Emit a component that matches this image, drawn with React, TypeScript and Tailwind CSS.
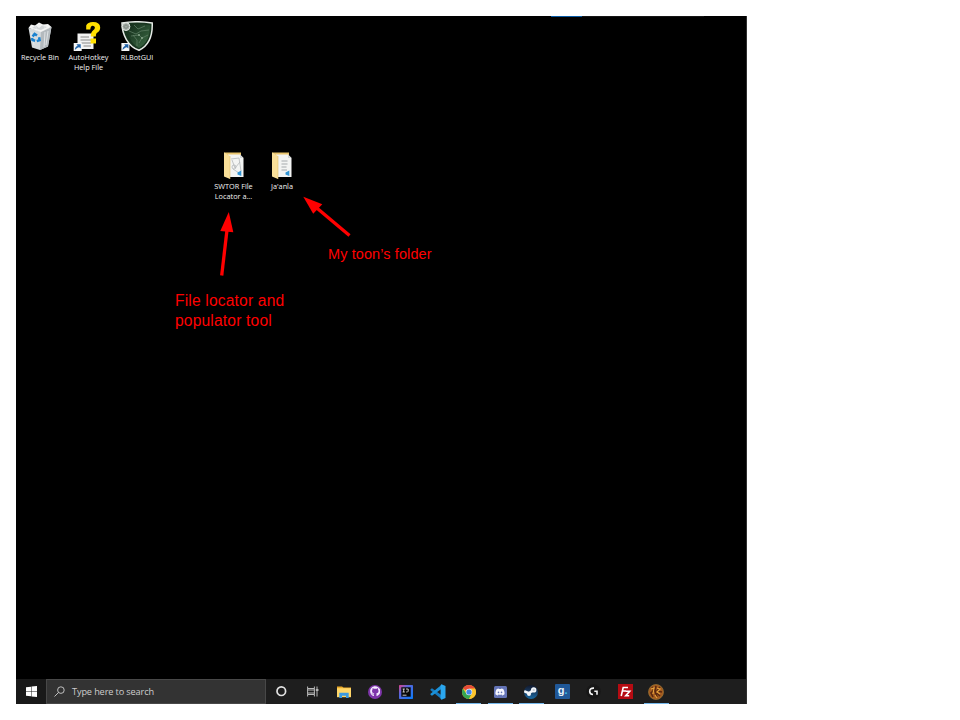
import React from "react";
import { FaGithub, FaDiscord } from "react-icons/fa";

const ui = "font-['Open_Sans','Noto_Sans',sans-serif]";

function Shortcut({ x, y }: { x: number; y: number }) {
  return (
    <g transform={`translate(${x} ${y})`}>
      <rect width="8" height="8" fill="#f4f6f8" />
      <path d="M1.2 7.1C1.1 4.5 2.4 3.1 4 2.9L2.8 1.2H7V5.4L5.5 4.2C3.8 4.5 2.6 5.4 1.2 7.1Z" fill="#1f62a8" />
    </g>
  );
}

function RecycleBin() {
  return (
    <svg width="32" height="32" viewBox="0 0 32 32">
      <path d="M4.5 7L17 10L27.5 6L24 25.5L16 29L8 26.5Z" fill="#d5dadd" />
      <path d="M17 10L27.5 6L24 25.5L16 29Z" fill="#b4babe" />
      <path d="M4.5 7L7 3.5L11 4.5L15 1.5L19 3.5L24 3L27.5 6L17 11Z" fill="#f3f4f4" />
      <path d="M8 7L12 4.5L15 7L18 4.5L23 6L17 9Z" fill="#d2d6d8" />
      <path d="M11 4.5L13 8M19 3.5L21 7M7 11L10 24M21 11L20 26M24 10L22 24" stroke="#e4e8ea" strokeWidth=".9" fill="none" />
      <g fill="none" stroke="#1a82d0" strokeWidth="2.5">
        <path d="M8.6 15.5L10.6 12.9L13 14.6" />
        <path d="M15.1 16.2L15.6 19.1L12.8 20.1" />
        <path d="M11.1 19.7L8.5 18.9L8 17" />
      </g>
    </svg>
  );
}

function HelpFile() {
  return (
    <svg width="32" height="32" viewBox="0 0 32 32">
      <path d="M4.5 12.5H20.5V28H4.5Z" fill="#f2f2f2" />
      <path d="M7.5 16H16M7.5 19H18M8.5 22H18M10.5 25H18" stroke="#888" strokeWidth="1" />
      <path d="M13.2 8.5V4.5Q14.5 1 20 1Q27 1 27.2 6.5Q27.2 10 23.7 12Q22.8 13 22.8 15.5H17.8Q17.8 11 20 9.5Q22.1 8 21.9 6.3Q21.5 4.7 19.7 4.7Q17.5 4.7 17.3 8.5Z" fill="#ffe000" />
      <path d="M17.6 17.5H23V22.5H17.6Z" fill="#ffe000" />
      <Shortcut x={.7} y={22} />
    </svg>
  );
}

function RLBot() {
  return (
    <svg width="34" height="32" viewBox="0 0 34 32">
      <defs><linearGradient id="shield" x2="1" y2="1"><stop stopColor="#122a19" /><stop offset="1" stopColor="#3d6c45" /></linearGradient></defs>
      <path d="M2 2C12 .3 22 .3 32.2 2C32.7 14.5 29 24.5 19 29.3C8 25.5 2 13.5 2 2Z" fill="#193620" stroke="#e7ece7" strokeWidth="1.5" />
      <path d="M7 4C14 2.8 22 2.8 30 4.3C30 15 27 22.5 19 27C11 22.5 7 14 7 4Z" fill="url(#shield)" />
      <path d="M9 10L16 13L21 10L29 9M11 15L19 14L22 17L28 14M14 4L18 8L25 5M17 25V19L13 14M22 17L19 22" fill="none" stroke="#638369" strokeWidth=".7" />
      <circle cx="19" cy="14" r=".9" fill="#91ae94" /><circle cx="22" cy="17" r=".9" fill="#91ae94" />
      <circle cx="6" cy="5.6" r="3.9" fill="#a2aaa4" stroke="#e5e8e5" strokeWidth="1" />
      <path d="M4 5.6L6 3.6L8 5.6L6 7.6Z" fill="none" stroke="#737b75" strokeWidth=".8" />
      <Shortcut x={1.4} y={22} />
    </svg>
  );
}

function Folder({ plain = false }: { plain?: boolean }) {
  return (
    <svg className="mb-[2px]" width="20" height="28" viewBox="0 0 20 28">
      <path d="M0 .5H17V24H1Z" fill="#eac66f" />
      <path d="M4 2.5H16L19.5 6V25H5Z" fill="#f3f4f3" />
      <path d="M16 2.5V6H19.5Z" fill="#d3d6d7" />
      {plain ? (
        <path d="M9.5 9H15.5M9.5 12H15.5M9.5 15H14.5M9.5 18H15" stroke="#9da2a6" strokeWidth=".9" />
      ) : (
        <g fill="none" stroke="#b4b8ba" strokeWidth=".8"><path d="M7 7L15 6L17 19M8 8L11 16L16 10M9 17L15 21" /><circle cx="10" cy="15" r="2" /></g>
      )}
      <path d="M13.5 20.5L17.3 18.5V24L13.5 22.5Z" fill="#3195d5" />
      <path d="M0 .5L6 4V27L0 24.5Z" fill="#f9df99" />
      <path d="M6 4V27" stroke="#dfbf70" strokeWidth=".6" />
    </svg>
  );
}

function DesktopIcon({ icon, lines, place }: { icon: React.ReactNode; lines: string[]; place: string }) {
  return (
    <div className={`absolute flex w-[60px] flex-col items-center ${place}`}>
      {icon}
      <div className={`-mt-px text-center text-[7.3px] leading-[10px] font-medium whitespace-nowrap text-[#f4f4f4] ${ui}`}>
        {lines.map((l) => <div key={l}>{l}</div>)}
      </div>
    </div>
  );
}

function TaskItem({ children, active }: { children: React.ReactNode; active?: boolean }) {
  return (
    <div className="relative flex h-full w-[31.25px] shrink-0 items-center justify-center">
      {children}
      {active && <div className="absolute bottom-0 h-px w-[25px] bg-[#76b9ed]" />}
    </div>
  );
}

function Taskbar() {
  return (
    <div className="flex h-[25px] w-full shrink-0 bg-[#1e1e1e]">
      <div className="flex w-[30px] shrink-0 items-center justify-center bg-[#191919]">
        <svg width="11" height="11" viewBox="0 0 11 11" fill="#fff"><path d="M0 1.2L5 .7V5.2H0ZM5.5.6L11 0V5.2H5.5ZM0 5.7H5V10.3L0 9.8ZM5.5 5.7H11V11L5.5 10.4Z" /></svg>
      </div>
      <div className="mr-[-.2px] flex w-[220px] shrink-0 items-center border border-[#484848] bg-[#333] pl-[7px]">
        <svg width="11" height="11" viewBox="0 0 11 11" fill="none" stroke="#cfcfcf" strokeWidth=".9"><circle cx="6.9" cy="4.1" r="3.3" /><path d="M4.5 6.5L.5 10.5" /></svg>
        <span className={`ml-[7px] text-[9.2px] leading-[14px] tracking-[-0.14px] whitespace-nowrap text-[#cdcdcd] ${ui}`}>Type here to search</span>
      </div>
      <TaskItem>
        <svg width="11" height="11" viewBox="0 0 11 11"><circle cx="5.3" cy="5.2" r="4.3" fill="none" stroke="#e2e2e2" strokeWidth="1.7" /></svg>
      </TaskItem>
      <TaskItem>
        <svg width="12" height="11" viewBox="0 0 12 11" fill="none" stroke="#c9c9c9" strokeWidth=".9"><path d="M.6 .5V2.5H7.4V.5M.6 10.5V8.5H7.4V10.5M.6 2.5V8.5M7.4 2.5V8.5M.6 4H7.4M.6 7H7.4M10 .5V10.5" /><path d="M8.8 4H11.5" strokeWidth="1.6" /></svg>
      </TaskItem>
      <TaskItem>
        <svg width="14" height="12" viewBox="0 0 14 12"><path d="M0 .5H5L6.5 1.5H14V11H0Z" fill="#e9a929" /><path d="M0 2.2H14V11.2H0Z" fill="#ffd668" /><path d="M2.3 12V6.8H11.7V12H9V9.7H5V12Z" fill="#3b9ae1" /></svg>
      </TaskItem>
      <TaskItem><div className="flex size-[14px] items-center justify-center rounded-full bg-[#7e35aa]"><FaGithub size={10.5} color="#f4eaff" /></div></TaskItem>
      <TaskItem>
        <svg width="14" height="14" viewBox="0 0 14 14"><defs><linearGradient id="idea" x2="1" y2="1"><stop stopColor="#e14386" /><stop offset=".35" stopColor="#5966dc" /><stop offset="1" stopColor="#087cfa" /></linearGradient></defs><rect width="14" height="14" rx=".7" fill="url(#idea)" /><rect x="2.3" y="2.3" width="9.4" height="9.4" fill="#080808" /><path d="M3.6 4H5.8M4.7 4V7M3.6 7H5.8M7 4H9.2V6.3Q9 7.2 7.2 7M3.6 10.2H7.5" fill="none" stroke="#ddd" strokeWidth=".9" /></svg>
      </TaskItem>
      <TaskItem>
        <svg width="16" height="16" viewBox="0 0 16 16"><path d="M.5 5.3L2 4.2L12 11.4V15.6L.5 6.3Z" fill="#167bc0" /><path d="M.5 10.7L2 11.8L12 4.6V.4L.5 9.7Z" fill="#1b91d9" /><path d="M11.5.3L15.5 2V14L11.5 15.7L10.6 14.8V1.2Z" fill="#2ba7ef" /></svg>
      </TaskItem>
      <TaskItem active>
        <svg width="14" height="14" viewBox="0 0 14 14"><circle cx="7" cy="7" r="7" fill="#fbc42e" /><path d="M7 7L.94 3.5A7 7 0 0 1 13.06 3.5Z" fill="#e64a39" /><path d="M.94 3.5A7 7 0 0 0 7 14L9.8 8.6L7 7L4.2 8.6Z" fill="#34a653" /><path d="M7 3.5H13.06A7 7 0 0 1 7 14L10 8.8Z" fill="#fbc42e" /><circle cx="7" cy="7" r="3.2" fill="#e6edf8" /><circle cx="7" cy="7" r="2.6" fill="#4285e8" /></svg>
      </TaskItem>
      <TaskItem active><div className="flex h-[12px] w-[13px] items-center justify-center rounded-[1.5px] bg-[#6474b6]"><FaDiscord size={10} color="#f6f7ff" /></div></TaskItem>
      <TaskItem active><div className="flex size-[14px] items-center justify-center overflow-hidden rounded-full bg-linear-to-b from-[#10182d] to-[#176ba5]">
        <svg width="14" height="14" viewBox="0 0 14 14"><path d="M0 6.2L5 8.2L9 5.3" fill="none" stroke="#f4f7fa" strokeWidth="2.6" /><circle cx="5" cy="9" r="2" fill="#f4f7fa" /><circle cx="9.7" cy="4.9" r="2.7" fill="#f4f7fa" /><circle cx="9.7" cy="4.9" r="1.2" fill="#c7d0d9" /></svg>
      </div></TaskItem>
      <TaskItem><div className="flex size-[15px] items-center justify-center rounded-[1px] bg-[#205898] font-['Liberation_Sans',sans-serif] text-[11px] leading-[13px] font-bold text-[#e9f1f8]"><span className="-mt-[2px]">g</span><span className="-mt-[2px] text-[#43bce5]">.</span></div></TaskItem>
      <TaskItem>
        <svg width="15" height="15" viewBox="0 0 15 15"><circle cx="7.5" cy="7.5" r="7.2" fill="#171717" /><path d="M8 4.1C5 3.9 3.7 5.5 3.7 7.3C3.7 9.2 5 10.5 7 10.5M8.3 7.2H11V10.8" fill="none" stroke="#f5f5f5" strokeWidth="1.6" /></svg>
      </TaskItem>
      <TaskItem>
        <svg width="15" height="15" viewBox="0 0 15 15"><rect width="15" height="15" fill="#b50b12" /><path d="M3.2 12L5.2 3.5H10M4.3 7H8M7.8 7.2H11.7L7.7 11.7H11.2" fill="none" stroke="#fff" strokeWidth="1.6" /></svg>
      </TaskItem>
      <TaskItem active>
        <svg width="16" height="16" viewBox="0 0 16 16"><circle cx="8" cy="8" r="7.5" fill="#a35b1f" stroke="#9b7436" strokeWidth=".7" /><path d="M4 3L6 6L3 9L5 13M8 2L7 7L9 13M12 3L9 7L14 8M9 9L12 12" fill="none" stroke="#592710" strokeWidth="1.6" /><path d="M3 5L6 4L5 10M9 4L12 5L9 8L12 10M7 11L9 14" fill="none" stroke="#e6a13c" strokeWidth="1.2" /></svg>
      </TaskItem>
    </div>
  );
}

export default function App() {
  return (
    <main className="h-[720px] w-[960px] overflow-hidden bg-white p-4">
      <section className="relative flex h-[688px] w-[731px] flex-col bg-black">
        <div className="flex h-px w-full shrink-0 pl-[535px]"><div className="w-[31px] bg-[#075aa5]" /><div className="w-[122px] bg-[#161616]" /></div>
        <div className="relative flex-1">
          <DesktopIcon place="left-[-6px] top-[4px]" icon={<RecycleBin />} lines={["Recycle Bin"]} />
          <DesktopIcon place="left-[42.5px] top-[4px]" icon={<HelpFile />} lines={["AutoHotkey", "Help File"]} />
          <DesktopIcon place="left-[91px] top-[4px]" icon={<RLBot />} lines={["RLBotGUI"]} />
          <DesktopIcon place="left-[187.5px] top-[135px]" icon={<Folder />} lines={["SWTOR File", "Locator a..."]} />
          <DesktopIcon place="left-[236px] top-[135px]" icon={<Folder plain />} lines={["Ja'anla"]} />
          <svg className="absolute left-[154px] top-[173px]" width="190" height="92" viewBox="170 190 190 92">
            <path d="M221.7 275.5L227 230" stroke="#f00" strokeWidth="3.3" /><path d="M228.8 212L220.3 231L233.3 232.2Z" fill="#f00" />
            <path d="M349.5 235.6L316.2 207.5" stroke="#f00" strokeWidth="3.3" /><path d="M303.3 196.8L313.2 213.8L322.3 204.2Z" fill="#f00" />
          </svg>
          <div className="absolute left-[312px] top-[227px] font-['Liberation_Sans',Arial,sans-serif] text-[14.5px] leading-[20px] tracking-[0.1px] whitespace-nowrap text-[#f00]">My toon’s folder</div>
          <div className="absolute left-[159px] top-[274px] font-['Liberation_Sans',Arial,sans-serif] text-[15.6px] leading-[19.5px] tracking-[0.17px] whitespace-nowrap text-[#f00]">File locator and<br />populator tool</div>
        </div>
        <Taskbar />
        <div className="absolute top-0 right-0 h-full w-px bg-[#303030]" />
      </section>
    </main>
  );
}
